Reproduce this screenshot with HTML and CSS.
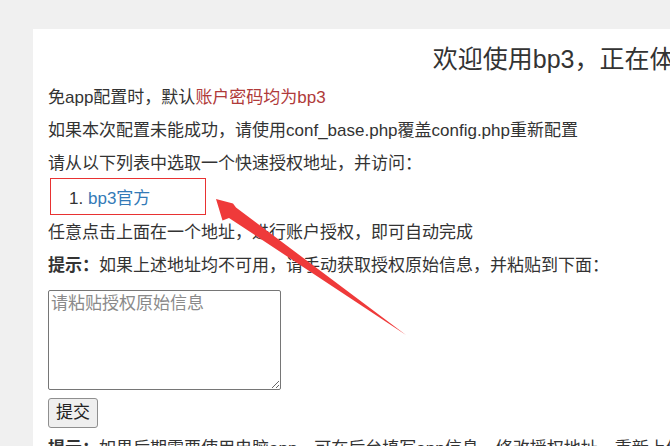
FILE: index.html
```html
<!DOCTYPE html>
<html lang="zh-CN">
<head>
<meta charset="utf-8">
<title>bp3</title>
<link rel="stylesheet" href="styles.css">
</head>
<body>
<div class="container">
  <h3 class="title">欢迎使用bp3，正在体验免app配置</h3>
  <p>免app配置时，默认<span class="danger">账户密码均为bp3</span></p>
  <p>如果本次配置未能成功，请使用conf_base.php覆盖config.php重新配置</p>
  <p>请从以下列表中选取一个快速授权地址，并访问：</p>
  <ol class="links">
    <li><a href="#">bp3官方</a></li>
  </ol>
  <p>任意点击上面在一个地址，进行账户授权，即可自动完成</p>
  <p><b>提示：</b>如果上述地址均不可用，请手动获取授权原始信息，并粘贴到下面：</p>
  <form class="form">
    <textarea class="raw" placeholder="请粘贴授权原始信息"></textarea>
    <button class="submit" type="button">提交</button>
  </form>
  <p><b>提示：</b>如果后期需要使用电脑app，可在后台填写app信息，修改授权地址，重新上传</p>
</div>
<svg class="arrow" width="670" height="446" viewBox="0 0 670 446">
  <polygon points="216,199 233,203.5 236,207.5 406,335 229,218 222.5,220.5" fill="#ef3a3a"/>
</svg>
</body>
</html>
```
FILE: styles.css
```css
html, body {
  margin: 0;
  overflow: hidden;
}
body {
  position: relative;
  background: #f0f0f0;
  font-family: "Liberation Sans", "Noto Sans CJK SC", sans-serif;
  font-size: 17px;
  line-height: 23px;
  color: #333;
  height: 446px;
}
.container {
  width: 1183px;
  box-sizing: border-box;
  margin: 29px 0 0 33px;
  padding: 16px 15px 20px;
  background: #fff;
}
.title {
  margin: 0 0 13px;
  font-size: 25px;
  line-height: 28px;
  font-weight: normal;
  text-align: center;
}
p {
  margin: 0 0 10px;
}
.danger {
  color: #b03a3a;
}
.links {
  width: 117px;
  margin: -7px 0 6px 2px;
  padding: 8px 0 4px 37px;
  border: 1px solid #e83232;
}
.links a {
  color: #337ab7;
  text-decoration: none;
}
.form {
  margin: 0 0 9px;
}
.raw {
  display: block;
  width: 233px;
  height: 100px;
  box-sizing: border-box;
  margin: 13px 0 0;
  padding: 2px;
  border: 1px solid #767676;
  border-radius: 2px;
  font-family: "Liberation Sans", "Noto Sans CJK SC", sans-serif;
  font-size: 17px;
  line-height: 22px;
  color: #333;
  background: #fff;
}
.raw::placeholder {
  color: #8a8a8a;
}
.submit {
  display: block;
  margin: 8px 0 0;
  width: 50px;
  height: 30px;
  box-sizing: border-box;
  padding: 0;
  font-family: "Liberation Sans", "Noto Sans CJK SC", sans-serif;
  font-size: 17px;
  line-height: 22px;
  color: #222;
  background: #efefef;
  border: 1px solid #8f8f8f;
  border-radius: 3px;
}
.arrow {
  position: absolute;
  left: 0;
  top: 0;
  pointer-events: none;
}
```
